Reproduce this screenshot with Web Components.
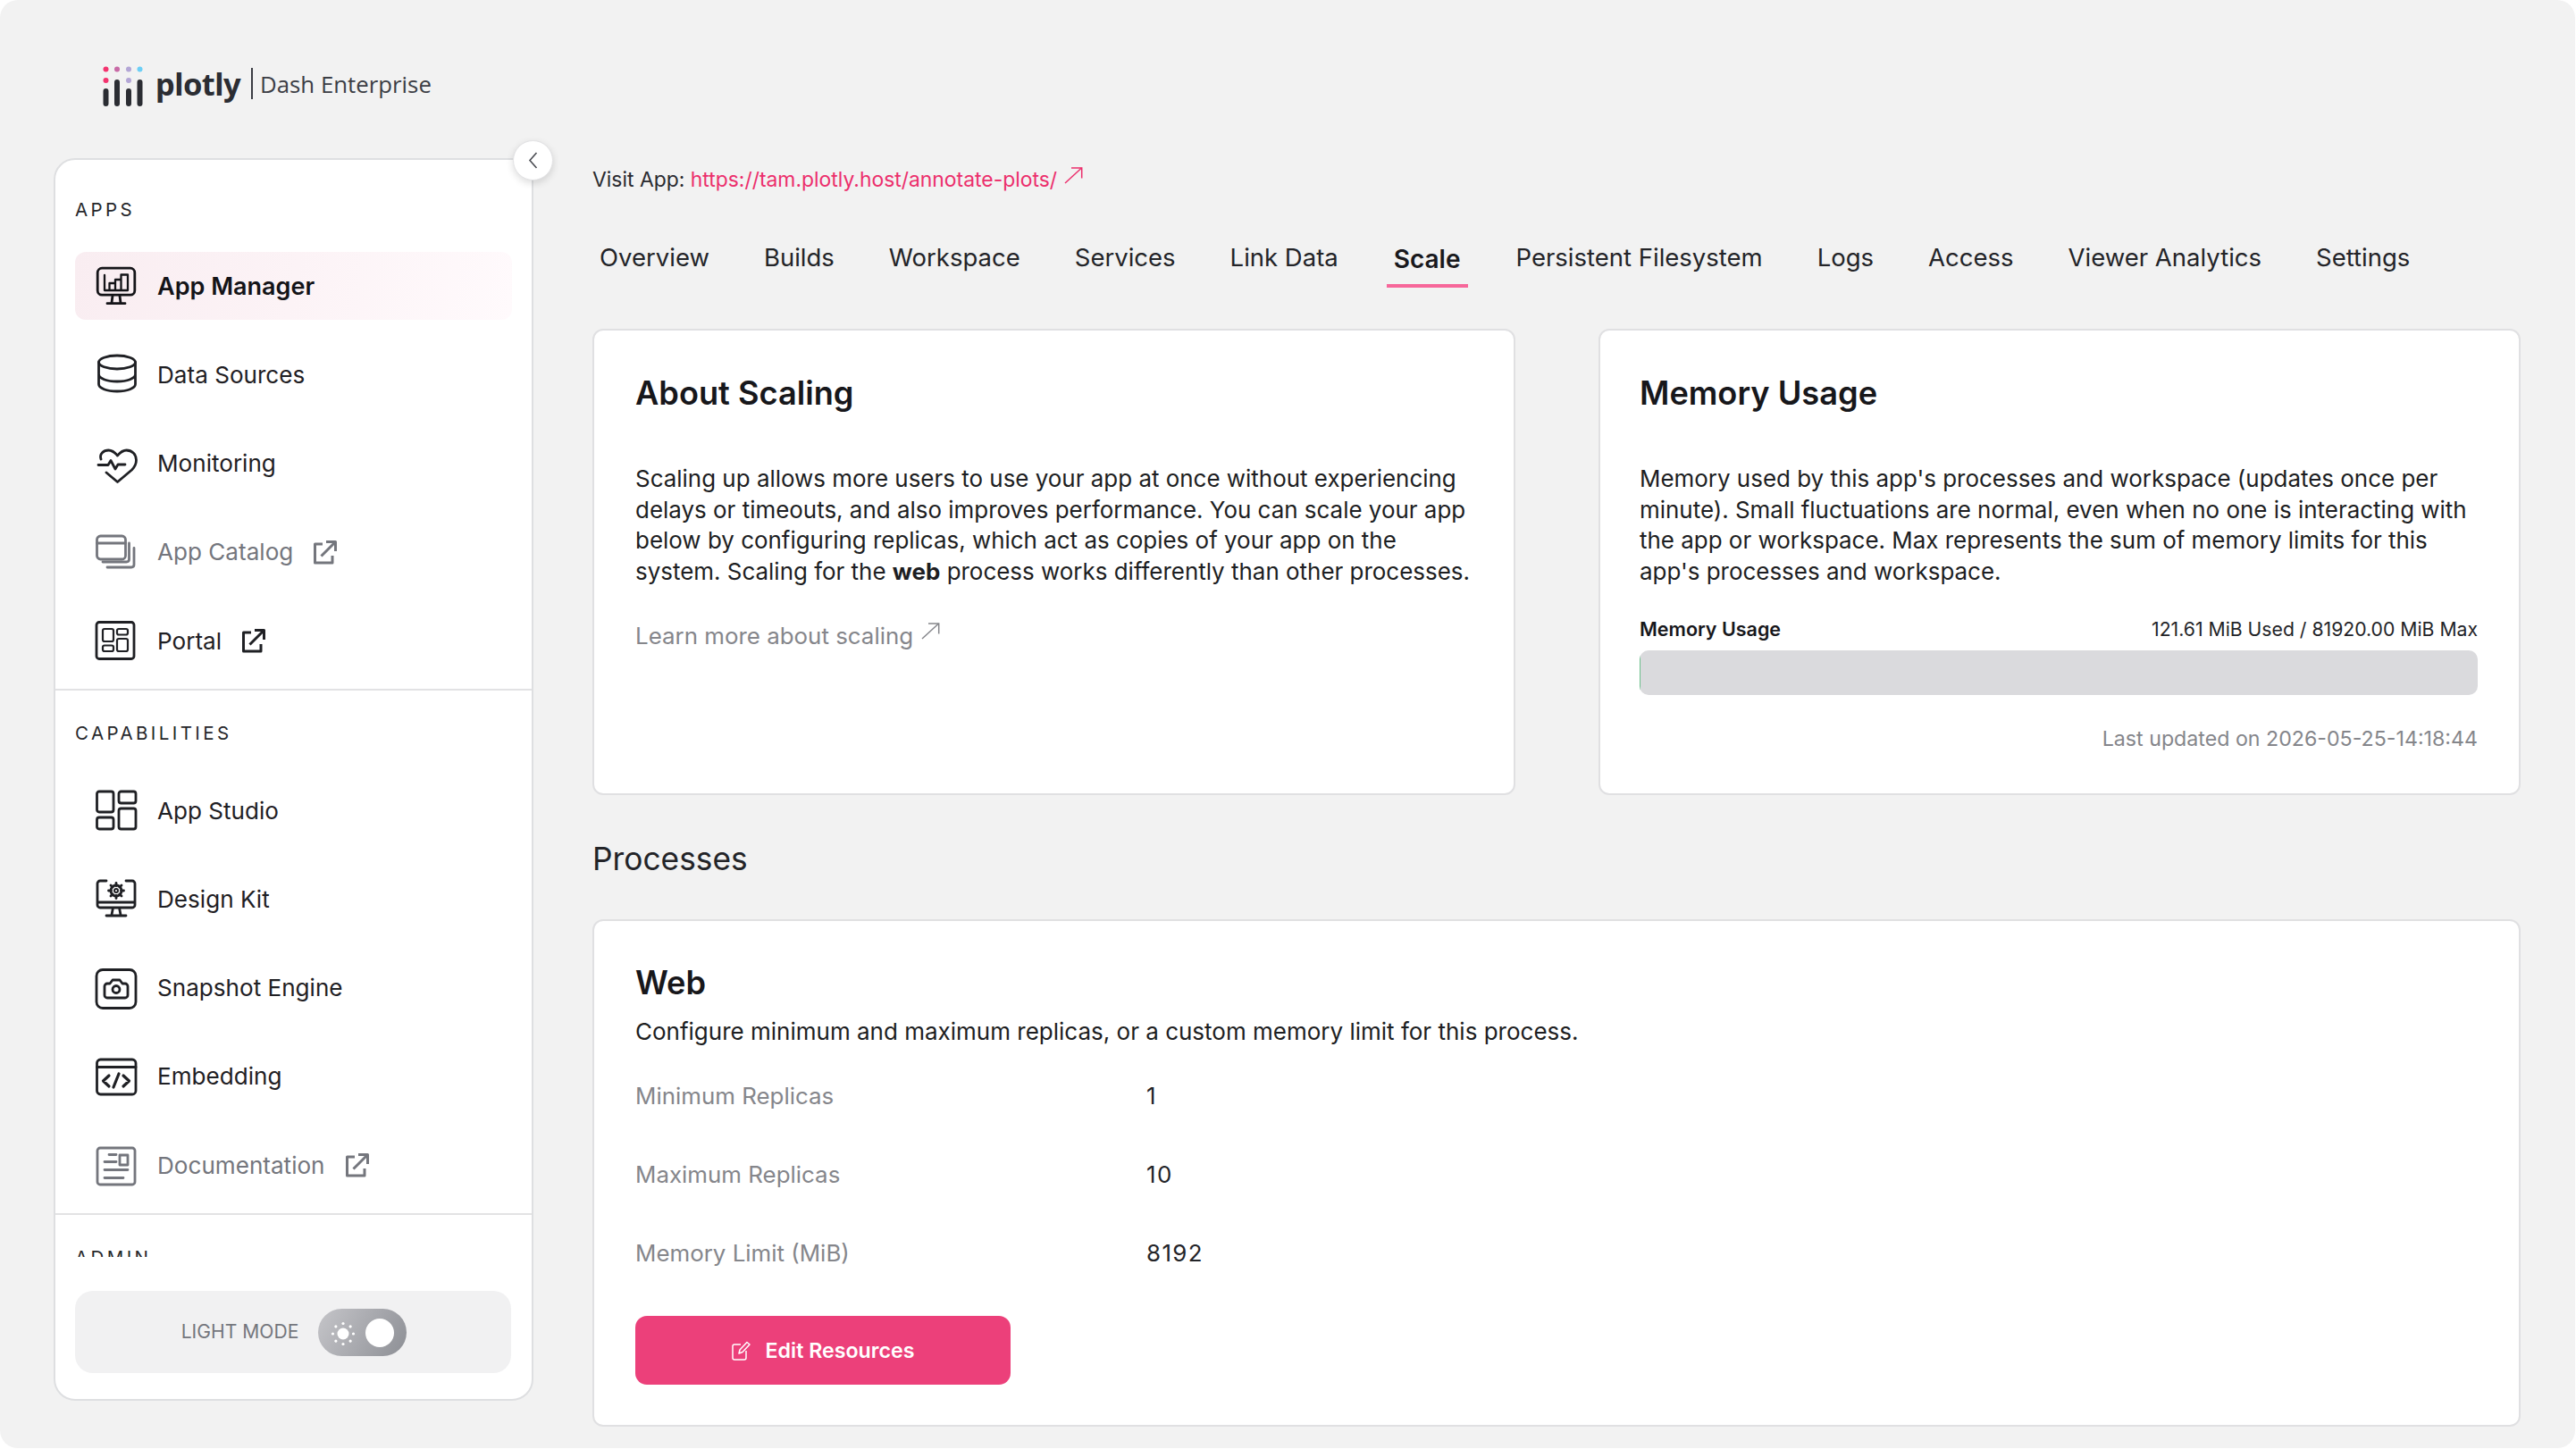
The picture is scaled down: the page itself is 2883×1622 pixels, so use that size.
<!DOCTYPE html>
<html lang="en">
<head>
<meta charset="utf-8">
<title>Dash Enterprise</title>
<style>
  html, body { margin: 0; height: 100%; background: #fff; }
  body { font-family: Inter, "Liberation Sans", sans-serif; color: #1b1b1f; overflow: hidden; }
</style>
</head>
<body>
<app-shell>
  <plotly-logo slot="logo"></plotly-logo>
  <side-nav slot="nav">
    <nav-section label="APPS" first>
      <nav-item icon="manager" active>App Manager</nav-item>
      <nav-item icon="data">Data Sources</nav-item>
      <nav-item icon="heart">Monitoring</nav-item>
      <nav-item icon="catalog" muted external>App Catalog</nav-item>
      <nav-item icon="portal" external>Portal</nav-item>
    </nav-section>
    <nav-section label="CAPABILITIES">
      <nav-item icon="studio">App Studio</nav-item>
      <nav-item icon="kit">Design Kit</nav-item>
      <nav-item icon="snapshot">Snapshot Engine</nav-item>
      <nav-item icon="embed">Embedding</nav-item>
      <nav-item icon="docs" muted external>Documentation</nav-item>
    </nav-section>
    <nav-section label="ADMIN"></nav-section>
    <theme-toggle slot="footer"></theme-toggle>
  </side-nav>
  <visit-link href="https://tam.plotly.host/annotate-plots/"></visit-link>
  <tab-bar active="Scale" tabs="Overview,Builds,Workspace,Services,Link Data,Scale,Persistent Filesystem,Logs,Access,Viewer Analytics,Settings"></tab-bar>
  <card-row>
    <info-card heading="About Scaling">
      <p>Scaling up allows more users to use your app at once without experiencing delays or timeouts, and also improves performance. You can scale your app below by configuring replicas, which act as copies of your app on the system. Scaling for the <b>web</b> process works differently than other processes.</p>
      <learn-link>Learn more about scaling</learn-link>
    </info-card>
    <info-card heading="Memory Usage" style="padding-left: 44px">
      <p>Memory used by this app's processes and workspace (updates once per minute). Small fluctuations are normal, even when no one is interacting with the app or workspace. Max represents the sum of memory limits for this app's processes and workspace.</p>
      <usage-meter label="Memory Usage" value="121.61 MiB Used / 81920.00 MiB Max" updated="Last updated on 2026-05-25-14:18:44"></usage-meter>
    </info-card>
  </card-row>
  <section-title>Processes</section-title>
  <process-card heading="Web" description="Configure minimum and maximum replicas, or a custom memory limit for this process.">
    <kv-row label="Minimum Replicas" value="1"></kv-row>
    <kv-row label="Maximum Replicas" value="10"></kv-row>
    <kv-row label="Memory Limit (MiB)" value="8192"></kv-row>
    <pink-button slot="action">Edit Resources</pink-button>
  </process-card>
</app-shell>

<script>
const EXT_ICON = `<svg width="28" height="28" viewBox="0 0 28 28" fill="none" stroke="currentColor" stroke-width="3" stroke-linejoin="round"><path d="M11 5H2.500v21h19.500v-8"/><path d="M9.500 18.500L25 3"/><path d="M15 2.500h10.500V13"/></svg>`;

const THIN_ARROW = `<svg width="21" height="19" viewBox="0 0 21 19" fill="none" stroke="currentColor" stroke-width="1.500"><path d="M1 18L19.500 1"/><path d="M8 1h11.700v11.500"/></svg>`;

const gearTeeth = [0, 45, 90, 135, 180, 225, 270, 315].map(a => `<path d="M24 6.500v3" transform="rotate(${a} 24 15)"/>`).join('');

// nav icons, all drawn on a 48 box
const ICONS = {
  manager: `<rect x="3.200" y="4.200" width="41.600" height="30" rx="5"/><path d="M20 35l-1 8M28 35l1 8M14 43.700h20"/><path d="M11 12v17h26M16.500 29v-8H23v8M23 29V17h6.500v12M29.500 29V11.500H37V29" stroke-width="2.300"/>`,
  data: `<ellipse cx="25" cy="10.500" rx="20.500" ry="7.500"/><path d="M4.500 10.500V35c0 4.500 9 8 20.500 8s20.500-3.500 20.500-8V10.500M4.500 24c0 4.500 9 8 20.500 8s20.500-3.500 20.500-8"/>`,
  heart: `<path d="M7 19C5 13 10 9 15.500 9c4 0 7 2.500 10 6 3-3.500 6-6 10-6 6 0 11 4.500 11 11 0 4-2 8-5 11L25.500 44.500 13 34"/><path d="M4 25.500h11l3-5 5 9.500 3-5h8"/>`,
  catalog: `<rect x="2.500" y="6" width="32" height="26" rx="4"/><path d="M2.500 14h32M38.500 14v18q0 3-3 3H9M44 19.500v18.500q0 3-3 3H14"/>`,
  portal: `<rect x="2" y="3.500" width="42" height="41" rx="3"/><rect x="9" y="11" width="12" height="14" rx="2" stroke-width="2.200"/><rect x="25" y="11" width="12" height="6.500" rx="2" stroke-width="2.200"/><rect x="9" y="29.500" width="12" height="6.500" rx="2" stroke-width="2.200"/><rect x="25" y="22" width="12" height="14" rx="2" stroke-width="2.200"/>`,
  studio: `<rect x="2.500" y="3" width="18.500" height="23" rx="2.500"/><rect x="27" y="3" width="19" height="13" rx="2.500"/><rect x="2.500" y="32" width="18.500" height="13" rx="2.500"/><rect x="27" y="22" width="19" height="23" rx="2.500"/>`,
  kit: `<path d="M13 4H6a3 3 0 0 0-3 3v24a3 3 0 0 0 3 3h36a3 3 0 0 0 3-3V7a3 3 0 0 0-3-3h-7M3 28h42M20.500 34l-1.500 8M27.500 34l1.500 8M13 43h22"/><circle cx="24" cy="15" r="6"/><circle cx="24" cy="15" r="2" stroke-width="2"/>${gearTeeth}`,
  snapshot: `<rect x="2" y="3.500" width="44" height="43" rx="7"/><path d="M14 19h3l3-4h8l3 4h3a3 3 0 0 1 3 3v10a3 3 0 0 1-3 3H14a3 3 0 0 1-3-3V22a3 3 0 0 1 3-3z"/><circle cx="24" cy="25.500" r="4"/>`,
  embed: `<rect x="2.500" y="5" width="43.500" height="39" rx="4"/><path d="M2.500 13.500h43.500"/><path d="M16 23l-6.500 6 6.500 6M32 23l6.500 6-6.500 6M27 21l-6 15" stroke-width="3.200"/>`,
  docs: `<rect x="3" y="5" width="42" height="41" rx="3"/><path d="M16 12.500h8M11 20.500h13M11 29.500h26M11 38.500h21"/><rect x="28" y="13" width="9" height="11"/>`
};

function shadow(el, html) {
  el.attachShadow({ mode: 'open' }).innerHTML = html;
}

class AppShell extends HTMLElement {
  constructor() {
    super();
    shadow(this, `
      <style>
        :host { display: grid; grid-template-columns: 537px 2158px; column-gap: 66px; grid-template-rows: 177px 1391px;
          padding-left: 60px; width: 2882px; height: 1621px; box-sizing: border-box; background: #f2f2f2; border-radius: 20px; overflow: hidden; }
        .logo { grid-column: 1 / 3; }
        main { display: block; align-self: start; min-width: 0; }
      </style>
      <div class="logo"><slot name="logo"></slot></div>
      <slot name="nav"></slot>
      <main><slot></slot></main>
    `);
  }
}

class PlotlyLogo extends HTMLElement {
  constructor() {
    super();
    shadow(this, `
      <style>
        :host { display: flex; align-items: flex-start; padding: 74px 0 0 55px; color: #2b2d33; }
        svg { display: block; flex: none; }
        .word { font: 700 34.500px/44px "Noto Sans", sans-serif; letter-spacing: -.6px; margin: -2px 0 0 11px; }
        .bar { width: 2px; height: 35px; background: #3b3d44; margin: 2px 8px 0 12px; }
        .sub { font: 400 25.800px/44px "Open Sans", sans-serif; color: #3c3e45; margin-top: -2px; }
      </style>
      <svg width="48" height="46" viewBox="0 0 48 46">
        <circle cx="3.500" cy="3.500" r="3" fill="#f3346f"/><circle cx="16" cy="3.500" r="3" fill="#c86aa6"/><circle cx="29" cy="3.500" r="3" fill="#b3a6d6"/><circle cx="41.500" cy="3.500" r="3" fill="#6dcff6"/>
        <circle cx="3.500" cy="16" r="3" fill="#f3346f"/><circle cx="29" cy="16" r="3" fill="#b3a6d6"/>
        <g stroke="#2b2d33" stroke-width="6" stroke-linecap="round"><path d="M3.500 28v14M16 18v24M29 28v14M41.500 18v24"/></g>
      </svg>
      <span class="word">plotly</span><span class="bar"></span><span class="sub">Dash Enterprise</span>
    `);
  }
}

class SideNav extends HTMLElement {
  constructor() {
    super();
    shadow(this, `
      <style>
        :host { display: flex; flex-direction: column; position: relative; box-sizing: border-box; background: #fff;
          border: 2px solid #dedfe1; border-radius: 24px; }
        .scroll { height: 1228px; overflow: hidden; flex: none; border-radius: 24px 24px 0 0; }
        .foot { padding: 38px 23px 0 22px; }
        .collapse { position: absolute; top: -22px; right: -24px; width: 45px; height: 45px; box-sizing: border-box; border-radius: 50%;
          background: #fff; border: 1px solid #e3e3e5; box-shadow: 0 3px 9px rgba(0,0,0,.14); display: flex; align-items: center; justify-content: center; color: #4a4c52; }
      </style>
      <div class="scroll"><slot></slot></div>
      <div class="foot"><slot name="footer"></slot></div>
      <div class="collapse"><svg width="11" height="19" viewBox="0 0 11 19" fill="none" stroke="currentColor" stroke-width="1.600"><path d="M9.500 1L2 9.500l7.500 8.500"/></svg></div>
    `);
  }
}

class NavSection extends HTMLElement {
  constructor() {
    super();
    const first = this.hasAttribute('first');
    shadow(this, `
      <style>
        :host { display: block; padding: ${first ? 44 : 36}px 22px 16px 22px; border-bottom: 2px solid #e2e2e4; }
        h4 { margin: 0 0 ${first ? 35 : 36}px; font: 400 20.500px/24px Inter, sans-serif; letter-spacing: 3.400px; color: #26272b; }
        .items { display: flex; flex-direction: column; gap: 23.250px; }
      </style>
      <h4>${this.getAttribute('label')}</h4>
      <div class="items"><slot></slot></div>
    `);
  }
}

class NavItem extends HTMLElement {
  constructor() {
    super();
    const ext = this.hasAttribute('external');
    shadow(this, `
      <style>
        :host { display: flex; align-items: center; height: 76px; padding-left: 22px; border-radius: 12px;
          font: 400 26.100px/34px Inter, sans-serif; color: #1f2024; }
        :host([active]) { font-size: 27px; font-weight: 600; color: #141418; background: linear-gradient(100deg, #f9edf1 0%, #fcf3f6 50%, #fffafc 100%); }
        :host([muted]) { color: #74767d; }
        .ico { display: block; flex: none; margin-right: 22px; }
        .txt { padding-top: 1px; }
        .ext { margin-left: 22px; display: flex; }
      </style>
      <svg class="ico" width="48" height="48" viewBox="0 0 48 48" fill="none" stroke="currentColor" stroke-width="2.800" stroke-linecap="round" stroke-linejoin="round">${ICONS[this.getAttribute('icon')]}</svg>
      <span class="txt"><slot></slot></span>
      ${ext ? `<span class="ext">${EXT_ICON}</span>` : ''}
    `);
  }
}

class ThemeToggle extends HTMLElement {
  constructor() {
    super();
    const dots = [0, 45, 90, 135, 180, 225, 270, 315].map(a => `<circle cx="14" cy="2.500" r="1.600" fill="#fff" transform="rotate(${a} 14 14)"/>`).join('');
    shadow(this, `
      <style>
        :host { display: flex; align-items: center; justify-content: center; height: 92px; box-sizing: border-box; padding-left: 2px; background: #f1f1f2; border-radius: 20px; gap: 22px; }
        .lbl { font: 400 21.100px/24px Inter, sans-serif; color: #74767d; }
        .sw { position: relative; width: 99px; height: 53px; border-radius: 27px; background: linear-gradient(120deg, #c5c5c9 0%, #8d8f95 100%); }
        .sw svg { position: absolute; left: 14px; top: 14px; }
        .knob { position: absolute; right: 14px; top: 11px; width: 32px; height: 32px; border-radius: 50%; background: #fff; }
      </style>
      <span class="lbl">LIGHT MODE</span>
      <div class="sw"><svg width="28" height="28" viewBox="0 0 28 28"><circle cx="14" cy="14" r="6.500" fill="#fff"/>${dots}</svg><span class="knob"></span></div>
    `);
  }
}

class VisitLink extends HTMLElement {
  constructor() {
    super();
    shadow(this, `
      <style>
        :host { display: flex; align-items: center; height: 44px; box-sizing: border-box; padding-top: 3px; font: 400 22.900px/40px Inter, sans-serif; color: #2a2b30; white-space: pre; }
        a { color: #ec2f6c; text-decoration: none; }
        svg { display: block; color: #ec2f6c; margin: -9px 0 0 8px; }
      </style>
      <span>Visit App: </span><a>${this.getAttribute('href')}</a>${THIN_ARROW}
    `);
  }
}

class TabBar extends HTMLElement {
  constructor() {
    super();
    const active = this.getAttribute('active');
    const tabs = this.getAttribute('tabs').split(',');
    shadow(this, `
      <style>
        :host { display: flex; height: 147px; box-sizing: border-box; padding-top: 44px; font: 400 27.500px/46px Inter, sans-serif; color: #232428; }
        .tab { padding: 0 8px; margin-right: 45px; box-sizing: border-box; white-space: nowrap; }
        .tab.on { font-size: 28px; font-weight: 600; color: #19191d; border-bottom: 4px solid #f7679a; padding-top: 2px; height: 57px; margin-left: 1px; margin-right: 46px; }
      </style>
      ${tabs.map(t => `<div class="tab${t === active ? ' on' : ''}">${t}</div>`).join('')}
    `);
  }
}

class CardRow extends HTMLElement {
  constructor() {
    super();
    shadow(this, `
      <style>
        :host { display: grid; grid-template-columns: 1033px 1032px; column-gap: 93px; height: 522px; }
      </style>
      <slot></slot>
    `);
  }
}

class InfoCard extends HTMLElement {
  constructor() {
    super();
    shadow(this, `
      <style>
        :host { display: block; box-sizing: border-box; background: #fff; border: 2px solid #e0e0e2; border-radius: 12px; padding: 45px 46px 0 46px; }
        h2 { margin: 0 0 54px; font: 600 36.200px/50px Inter, sans-serif; color: #17171b; }
        ::slotted(p) { margin: 0; font: 400 25.950px/34.700px Inter, sans-serif; color: #1d1e22; }
      </style>
      <h2>${this.getAttribute('heading')}</h2>
      <slot></slot>
    `);
  }
}

class LearnLink extends HTMLElement {
  constructor() {
    super();
    shadow(this, `
      <style>
        :host { display: flex; margin-top: 34px; font: 400 25.900px/40px Inter, sans-serif; color: #85868b; }
        svg { display: block; margin: 5px 0 0 9px; }
      </style>
      <slot></slot>${THIN_ARROW}
    `);
  }
}

class UsageMeter extends HTMLElement {
  constructor() {
    super();
    shadow(this, `
      <style>
        :host { display: block; margin-top: 32px; }
        .top { display: flex; justify-content: space-between; font: 400 21.200px/28px Inter, sans-serif; color: #232428; }
        b { font-size: 21.500px; font-weight: 600; color: #17171b; }
        .track { height: 50px; margin-top: 10px; background: #dadadd; border-radius: 10px; overflow: hidden; }
        .fill { width: 1px; height: 100%; background: #6cc08b; }
        .upd { margin-top: 35px; text-align: right; font: 400 23.200px/28px Inter, sans-serif; color: #85868b; }
      </style>
      <div class="top"><b>${this.getAttribute('label')}</b><span>${this.getAttribute('value')}</span></div>
      <div class="track"><div class="fill"></div></div>
      <div class="upd">${this.getAttribute('updated')}</div>
    `);
  }
}

class SectionTitle extends HTMLElement {
  constructor() {
    super();
    shadow(this, `
      <style>
        :host { display: block; height: 139px; box-sizing: border-box; padding-top: 49px; font: 400 35.300px/46px Inter, sans-serif; color: #232428; }
      </style>
      <slot></slot>
    `);
  }
}

class ProcessCard extends HTMLElement {
  constructor() {
    super();
    shadow(this, `
      <style>
        :host { display: block; height: 568px; box-sizing: border-box; background: #fff; border: 2px solid #e0e0e2; border-radius: 12px; padding: 44px 46px 0 46px; }
        h2 { margin: 0; font: 600 36.200px/50px Inter, sans-serif; color: #17171b; }
        p { margin: 5px 0 35px; padding-top: 8px; font: 400 26px/34px Inter, sans-serif; color: #1d1e22; }
        .rows { display: flex; flex-direction: column; gap: 48px; }
        .act { margin-top: 50px; }
      </style>
      <h2>${this.getAttribute('heading')}</h2>
      <p>${this.getAttribute('description')}</p>
      <div class="rows"><slot></slot></div>
      <div class="act"><slot name="action"></slot></div>
    `);
  }
}

class KvRow extends HTMLElement {
  constructor() {
    super();
    shadow(this, `
      <style>
        :host { display: flex; height: 40px; align-items: center; font: 400 25.900px/40px Inter, sans-serif; }
        .k { width: 572px; color: #85868b; }
        .v { color: #232428; letter-spacing: 1.400px; }
      </style>
      <span class="k">${this.getAttribute('label')}</span><span class="v">${this.getAttribute('value')}</span>
    `);
  }
}

class PinkButton extends HTMLElement {
  constructor() {
    super();
    shadow(this, `
      <style>
        :host { display: flex; align-items: center; justify-content: center; gap: 17px; width: 420px; height: 77px; background: #ec407a; border-radius: 13px;
          color: #fff; font: 600 23.200px/30px Inter, sans-serif; }
        svg { display: block; }
      </style>
      <svg width="21" height="22" viewBox="0 0 21 22" fill="none" stroke="#fff" stroke-width="1.500" stroke-linejoin="round"><path d="M10 4H3a2 2 0 0 0-2 2v13a2 2 0 0 0 2 2h11a2 2 0 0 0 2-2v-8"/><path d="M8 14l1-4 8-8.500 3 2.500-8 8.500z"/></svg>
      <slot></slot>
    `);
  }
}

customElements.define('app-shell', AppShell);
customElements.define('plotly-logo', PlotlyLogo);
customElements.define('side-nav', SideNav);
customElements.define('nav-section', NavSection);
customElements.define('nav-item', NavItem);
customElements.define('theme-toggle', ThemeToggle);
customElements.define('visit-link', VisitLink);
customElements.define('tab-bar', TabBar);
customElements.define('card-row', CardRow);
customElements.define('info-card', InfoCard);
customElements.define('learn-link', LearnLink);
customElements.define('usage-meter', UsageMeter);
customElements.define('section-title', SectionTitle);
customElements.define('process-card', ProcessCard);
customElements.define('kv-row', KvRow);
customElements.define('pink-button', PinkButton);
</script>
</body>
</html>
